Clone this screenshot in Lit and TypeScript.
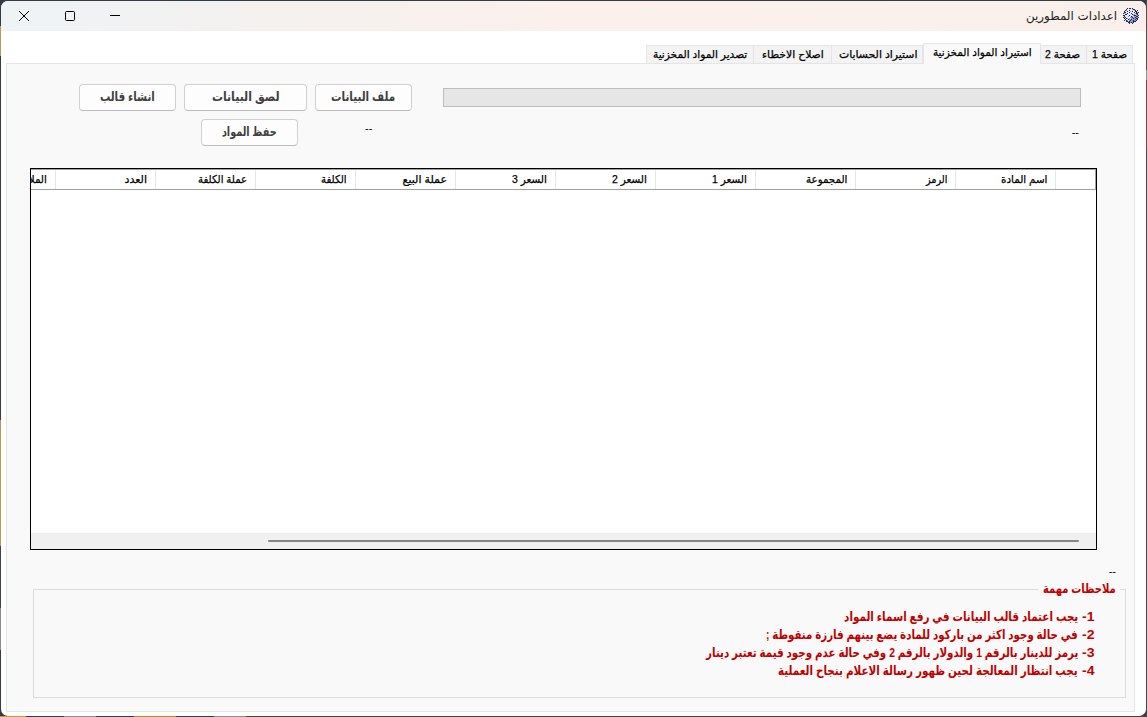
import { LitElement, html, css, svg } from "lit";
import { customElement, property } from "lit/decorators.js";

@customElement("fit-text")
class FitText extends LitElement {
  @property({ type: Number }) w = 50;
  @property() text = "";
  static styles = css`
    :host { display: block; flex: none; direction: rtl; white-space: pre; }
    .t { display: inline-block; transform-origin: 100% 50%; }
  `;
  async firstUpdated() {
    await document.fonts.ready;
    const t = this.renderRoot.querySelector(".t") as HTMLElement;
    t.style.transform = `scaleX(${this.w / t.offsetWidth})`;
  }
  render() {
    return html`<span class="t">${this.text}</span>`;
  }
}

const fit = (text: string, w: number) => html`<fit-text style="width:${w}px" .w=${w} .text=${text}></fit-text>`;

const TABS = [
  { t: "صفحة 1", w: 46, tw: 35, p: 5 },
  { t: "صفحة 2", w: 46, tw: 35, p: 6 },
  { t: "استيراد المواد المخزنية", w: 118, tw: 99, p: 8, on: true },
  { t: "استيراد الحسابات", w: 91, tw: 78, p: 5 },
  { t: "اصلاح الاخطاء", w: 78, tw: 62, p: 7 },
  { t: "تصدير المواد المخزنية", w: 108, tw: 94, p: 6 },
];

const COLS: [string, number][] = [
  ["اسم المادة", 46],
  ["الرمز", 21],
  ["المجموعة", 41],
  ["السعر 1", 35],
  ["السعر 2", 35],
  ["السعر 3", 35],
  ["عملة البيع", 44],
  ["الكلفة", 26],
  ["عملة الكلفة", 49],
  ["العدد", 22],
  ["الملاحظات", 46],
];

const NOTES: [string, string, number][] = [
  ["1-", "يجب اعتماد قالب البيانات في رفع اسماء المواد", 234],
  ["2-", "في حالة وجود اكثر من باركود للمادة يضع بينهم فارزة منقوطة ;", 312],
  ["3-", "يرمز للدينار بالرقم 1 والدولار بالرقم 2 وفي حالة عدم وجود قيمة تعتبر دينار", 372],
  ["4-", "يجب انتظار المعالجة لحين ظهور رسالة الاعلام بنجاح العملية", 300],
];

@customElement("app-root")
class AppRoot extends LitElement {
  static styles = css`
    * { box-sizing: border-box; }
    :host {
      display: block; box-sizing: border-box; width: 1147px; height: 717px; padding: 1px; overflow: hidden;
      background:
        linear-gradient(90deg, #c9982c 0 26px, #343b42 26px 64px, #8b8b8b 64px 96px, #343b42 96px 134px, #b8862c 134px 176px, #343b42 176px 214px, #8b8b8b 214px 246px, #4a4238 246px) 0 716px / 100% 1px no-repeat,
        linear-gradient(180deg, #4a4f4c 0 70px, #6fa39c 70px 80px, #6d4a40 80px 150px, #3c484c 150px) 1146px 0 / 1px 100% no-repeat,
        linear-gradient(180deg, #343b42 0 26px, #b89a55 26px 56px, #343b42 56px 420px, #b89a55 420px 546px, #3c444a 546px 608px, #8b8b8b 608px 650px, #343b42 650px);
      font: 11px/16px "Liberation Sans", "DejaVu Sans", sans-serif; color: #000;
    }
    .win { width: 1145px; height: 715px; background: #fff; border-radius: 7px; overflow: hidden; }
    .bar {
      height: 30px; display: flex; align-items: center; justify-content: space-between;
      background: linear-gradient(90deg, #eef3f6, #f4f1ef 22%, #fbf0ec 50%, #f9f0ec);
      padding: 0 7px 0 17px;
    }
    .ctl { display: flex; gap: 34px; }
    .ctl svg { display: block; }
    .name { display: flex; align-items: center; gap: 6px; font: 12px/18px "DejaVu Sans", sans-serif; color: #222; }
    .tabs { direction: rtl; height: 32px; padding-right: 13px; display: flex; align-items: flex-end; }
    .tab { height: 18px; border: 1px solid #e5e5e5; border-bottom: 0; border-left: 0; background: #f3f3f3; display: flex; line-height: 17px; }
    .tab, .col { -webkit-text-stroke: 0.25px #000; }
    .tab:last-child { border-left: 1px solid #e5e5e5; }
    .tab.on { height: 21px; background: #f9f9f9; margin-bottom: -1px; z-index: 1; border-left: 1px solid #e5e5e5; }
    .page { margin-left: 5px; width: 1129px; height: 649px; border: 1px solid #e5e5e5; background: #f9f9f9; padding: 20px 0 0; }
    .top { direction: ltr; display: grid; grid-template-columns: 333px 31px 638px; padding-left: 72px; height: 84px; }
    .row { display: flex; gap: 8px; }
    .row.second { margin-top: 8px; padding-left: 122px; }
    .btn {
      width: 97px; height: 27px; border: 1px solid #d0d0d0; border-bottom-color: #bcbcbc; border-radius: 4px;
      background: #fdfdfd; display: flex; justify-content: center; color: #404040; font-weight: bold; font-size: 13px; line-height: 23px;
    }
    .btn.wide { width: 123px; }
    .row .dash { padding-left: 59px; margin-top: 1px; }
    .prog { grid-column: 3; }
    .track { margin-top: 4px; height: 19px; border: 1px solid #bcbcbc; background: #e6e6e6; }
    .prog .dash { text-align: right; padding: 17px 2px 0 0; }
    .grid { margin-left: 23px; width: 1067px; height: 382px; border: 1px solid #000; display: flex; flex-direction: column; justify-content: space-between; background: #fff; }
    .head { direction: rtl; height: 21px; border: 1px solid #a0a0a0; border-left: 0; display: flex; overflow: hidden; }
    .col { flex: none; width: 100px; border-left: 1px solid #e5e5e5; padding-right: 8px; display: flex; line-height: 18px; }
    .col.idx { width: 40px; }
    .scroll { height: 16px; background: #f0f0f0; padding: 7px 0 0 237px; }
    .thumb { width: 811px; height: 2px; background: #868686; border-radius: 1px; }
    .status { text-align: right; padding: 13px 18px 0 0; height: 30px; }
    .notes {
      direction: rtl; margin: 0 0 0 26px; width: 1093px; height: 118px; border: 1px solid #dcdcdc; padding: 10px 30px 0 0;
      color: #c00000; font-weight: bold; font-size: 13px; line-height: 18px;
    }
    .note { display: flex; gap: 4px; }
    legend { margin-right: -25px; padding: 0 4px 0 5px; line-height: 18px; }
  `;

  appIcon() {
    const rows = [
      "....k.kk.k......",
      "...kwwwwwbkk....",
      "..kbwwkwwwwbk.k.",
      ".kwwkwwbwkwwkk..",
      ".kkwwwkwwwwkwkbk",
      "kbwwkwwwkwwwbkk.",
      "..kkwwwwwkbbwbk.",
      "kkwwwwkwwwbkkbbk",
      ".kwwwbwwkbwbbkk.",
      "kbkwwwwbbkbbkbbk",
      ".kwkbwbwbbkbbkk.",
      "..kwwkbbkbbbkbk.",
      ".k.kbwbkbbkbbk..",
      "...kkbkbbbkkk...",
      ".....kkbkbk.....",
      "......k..k......",
    ];
    const fill: Record<string, string> = { k: "#23264a", w: "#e6eafa", b: "#8f99cc" };
    return html`<svg width="16" height="16" viewBox="0 0 16 16" shape-rendering="crispEdges">
      ${rows.flatMap((r, y) => [...r].map((c, x) => (fill[c] ? svg`<rect x=${x} y=${y} width="1" height="1" fill=${fill[c]}/>` : "")))}
    </svg>`;
  }

  render() {
    return html`<div class="win">
      <div class="bar">
        <div class="ctl">
          <svg width="12" height="12" viewBox="0 0 12 12"><path d="M1 1L11 11M11 1L1 11" stroke="#000" stroke-width="1"/></svg>
          <svg width="12" height="12" viewBox="0 0 12 12"><rect x="1.5" y="1.5" width="9" height="9" rx="1" fill="none" stroke="#000"/></svg>
          <svg width="12" height="12" viewBox="0 0 12 12"><path d="M0 5.5H10" stroke="#000"/></svg>
        </div>
        <div class="name">${fit("اعدادات المطورين", 91)}${this.appIcon()}</div>
      </div>
      <div class="tabs">
        ${TABS.map((t) => html`<div class="tab ${t.on ? "on" : ""}" style="width:${t.w}px;padding-right:${t.p}px">${fit(t.t, t.tw)}</div>`)}
      </div>
      <div class="page">
        <div class="top">
          <div>
            <div class="row">
              <div class="btn">${fit("انشاء قالب", 55)}</div>
              <div class="btn wide">${fit("لصق البيانات", 68)}</div>
              <div class="btn">${fit("ملف البيانات", 64)}</div>
            </div>
            <div class="row second">
              <div class="btn">${fit("حفظ المواد", 55)}</div>
              <div class="dash">--</div>
            </div>
          </div>
          <div class="prog"><div class="track"></div><div class="dash">--</div></div>
        </div>
        <div class="grid">
          <div class="head">
            <div class="col idx"></div>
            ${COLS.map(([t, w]) => html`<div class="col">${fit(t, w)}</div>`)}
          </div>
          <div class="scroll"><div class="thumb"></div></div>
        </div>
        <div class="status">--</div>
        <fieldset class="notes">
          <legend>${fit("ملاحظات مهمة", 73)}</legend>
          ${NOTES.map(([n, t, w]) => html`<div class="note">${fit(n, 13)}${fit(t, w)}</div>`)}
        </fieldset>
      </div>
    </div>`;
  }
}
